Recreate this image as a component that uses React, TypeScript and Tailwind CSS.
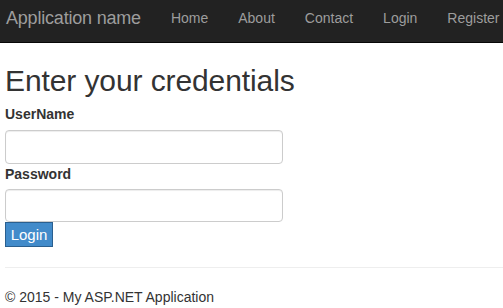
import React from 'react';

const links = ['Home', 'About', 'Contact', 'Login', 'Register'];

const App: React.FC = () => {
  return (
    <div className="min-h-[308px] w-[503px] overflow-hidden bg-white text-[#333] font-['Liberation_Sans',Arial,sans-serif] text-[14px] leading-[20px]">
      <nav className="flex h-[43px] items-center whitespace-nowrap border-b border-[#080808] bg-[#222] pb-[6px]">
        <div className="shrink-0 pl-[6px] pr-[30px] text-[18px] leading-[20px] tracking-[-0.2px] text-[#9d9d9d]">
          Application name
        </div>
        <ul className="flex shrink-0 gap-[30px]">
          {links.map((l) => (
            <li key={l} className="text-[14px] text-[#9d9d9d]">
              {l}
            </li>
          ))}
        </ul>
      </nav>

      <main className="pl-[5px]">
        <h2 className="mt-[21px] text-[30px] leading-[33px] font-normal tracking-[-0.1px]">Enter your credentials</h2>
        <form className="mt-[7px] flex flex-col items-start">
          <label className="font-bold">UserName</label>
          <input
            type="text"
            className="mt-[6px] h-[34px] w-[278px] rounded-[4px] border border-[#ccc] bg-white shadow-[inset_0_1px_1px_rgba(0,0,0,0.075)]"
          />
          <label className="font-bold">Password</label>
          <input
            type="password"
            className="mt-[5px] h-[33px] w-[278px] rounded-[4px] border border-[#ccc] bg-white shadow-[inset_0_1px_1px_rgba(0,0,0,0.075)]"
          />
          <button
            type="button"
            className="h-[25px] w-[48px] border border-[#2a5f8f] bg-[#428bca] text-[15px] leading-[20px] text-white"
          >
            Login
          </button>
        </form>
        <hr className="mt-[20px] border-t border-[#eee]" />
        <footer className="mt-[19px]">© 2015 - My ASP.NET Application</footer>
      </main>
    </div>
  );
};

export default App;
